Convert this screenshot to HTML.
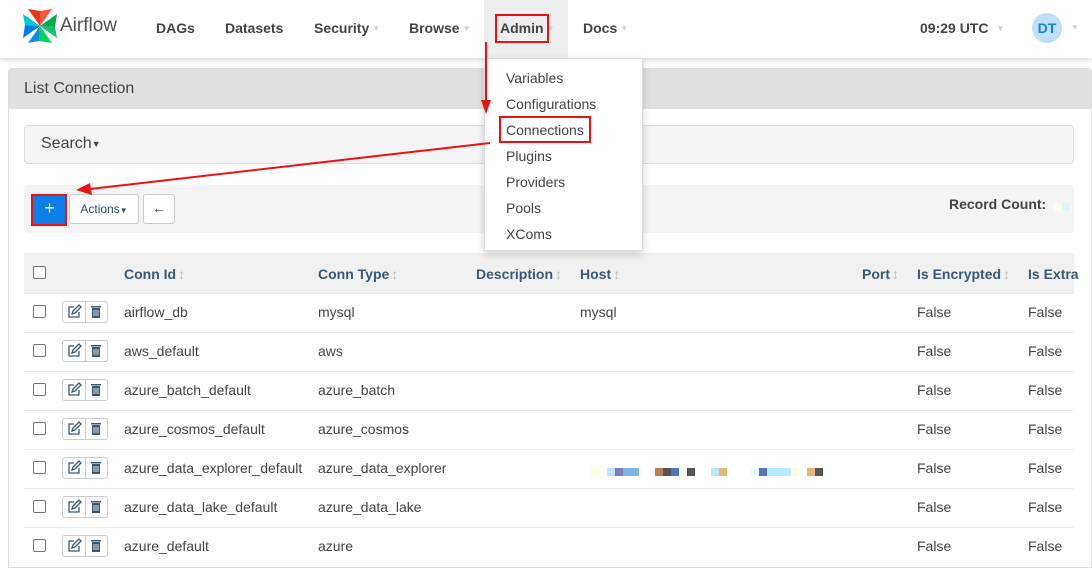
<!DOCTYPE html>
<html><head><meta charset="utf-8"><style>
*{box-sizing:border-box;margin:0;padding:0}
body{width:1092px;height:563px;overflow:hidden;background:#fff;font-family:"Liberation Sans",Arial,sans-serif;position:relative;color:#333}
.a{position:absolute;white-space:nowrap}
.nav{position:absolute;left:0;top:0;width:1092px;height:58px;background:#fff;box-shadow:0 2px 5px rgba(0,0,0,.15);z-index:2}
.ni{position:absolute;top:20px;font-size:14px;font-weight:bold;color:#444}
.car{color:#d8c8d8;font-size:8px;font-weight:normal;margin-left:3px;vertical-align:2px}
.panel{position:absolute;left:8px;top:68px;width:1084px;height:500px;border:1px solid #ddd;border-radius:4px 4px 0 0;background:#fff}
.ph{position:absolute;left:0;top:0;right:0;height:40px;background:#e0e0e0}
.th{font-size:14px;font-weight:bold;color:#3b5874;top:266px}
.sort{color:#bbb;font-weight:bold;margin-left:2px}
.td{font-size:14px;color:#444}
.cb{position:absolute;width:13px;height:13px;border:1px solid #777;border-radius:2px;background:#fff}
.row{position:absolute;left:24px;width:1050px;height:39px;border-top:1px solid #eaeaea}
.ab{position:absolute;left:62px;width:46px;height:22px;border:1px solid #ccc;border-radius:3px;background:#fff}
.dd{position:absolute;left:484px;top:58px;width:159px;height:193px;background:#fff;border:1px solid #ddd;box-shadow:0 3px 8px rgba(0,0,0,.18);z-index:3}
.dd div{position:absolute;left:21px;font-size:14px;color:#444}
.px{position:absolute;top:468px;height:8px}
.sep{position:absolute;left:85px;width:1px;height:22px;background:#ccc}
</style></head><body>
<div class="nav">
<svg class="a" style="left:22px;top:8px" width="36" height="36" viewBox="0 0 36 36">
<path d="M18 18 L6 1 L19 3 Z" fill="#e43921"/>
<path d="M18 18 L35 6 L33 19 Z" fill="#00ad46"/>
<path d="M18 18 L30 35 L17 33 Z" fill="#04d659"/>
<path d="M18 18 L1 30 L3 17 Z" fill="#017cee"/>
<path d="M18 18 L3 17 L1 6 Z" fill="#00c7d4"/>
<path d="M18 18 L19 3 L30 1 Z" fill="#f05a3a"/>
<path d="M18 18 L33 19 L35 30 Z" fill="#11c26d"/>
<path d="M18 18 L17 33 L6 35 Z" fill="#0a8fe8"/>
</svg>
<div class="a" style="left:60px;top:15px;font-size:19px;color:#51504f">Airflow</div>
<div class="ni" style="left:156px">DAGs</div>
<div class="ni" style="left:225px">Datasets</div>
<div class="ni" style="left:314px">Security<span class="car">▼</span></div>
<div class="ni" style="left:409px">Browse<span class="car">▼</span></div>
<div class="a" style="left:484px;top:0;width:84px;height:58px;background:#eee"></div>
<div class="ni" style="left:500px">Admin<span class="car">▼</span></div>
<div class="ni" style="left:583px">Docs<span class="car">▼</span></div>
<div class="ni" style="left:920px">09:29 UTC<span class="car" style="margin-left:8px">▼</span></div>
<div class="a" style="left:1032px;top:13px;width:30px;height:30px;border-radius:50%;background:#bfdffb;color:#1a7fe0;font-weight:bold;font-size:14px;text-align:center;line-height:30px">DT</div>
<div class="a car" style="left:1068px;top:23px">▼</div>
</div>

<div class="panel"><div class="ph"></div>
<div class="a" style="left:15px;top:11px;font-size:16px;color:#444">List Connection</div></div>

<div class="a" style="left:24px;top:125px;width:1050px;height:39px;background:#f4f4f4;border:1px solid #ddd;border-radius:4px"></div>
<div class="a" style="left:41px;top:135px;font-size:16px;color:#444">Search<span style="font-size:9px;vertical-align:1px">▼</span></div>

<div class="a" style="left:24px;top:185px;width:1050px;height:48px;background:#f4f4f4;border-radius:4px"></div>
<div class="a" style="left:33px;top:194px;width:33px;height:30px;background:#0d7ee8;color:#fff;font-size:18px;text-align:center;line-height:28px">+</div>
<div class="a" style="left:69px;top:194px;width:70px;height:30px;background:#fff;border:1px solid #ccc;border-radius:3px;font-size:12px;color:#2d4f6f;text-align:center;line-height:28px">Actions<span style="font-size:8px">▼</span></div>
<div class="a" style="left:143px;top:194px;width:32px;height:30px;background:#fff;border:1px solid #ccc;border-radius:3px;font-size:14px;color:#2d4f6f;text-align:center;line-height:27px">←</div>
<div class="a" style="left:949px;top:196px;font-size:14px;font-weight:bold;color:#444">Record Count:</div>
<div class="a" style="left:1054px;top:203px;width:8px;height:8px;background:#fbfbe8"></div>
<div class="a" style="left:1062px;top:203px;width:8px;height:8px;background:#e0f4f8"></div>

<div class="a" style="left:24px;top:253px;width:1050px;height:40px;background:#f0f0f0"></div>
<div class="cb" style="left:33px;top:266px"></div>
<div class="a th" style="left:124px">Conn Id<span class="sort">↕</span></div>
<div class="a th" style="left:318px">Conn Type<span class="sort">↕</span></div>
<div class="a th" style="left:476px">Description<span class="sort">↕</span></div>
<div class="a th" style="left:580px">Host<span class="sort">↕</span></div>
<div class="a th" style="left:862px">Port<span class="sort">↕</span></div>
<div class="a th" style="left:917px">Is Encrypted<span class="sort">↕</span></div>
<div class="a th" style="left:1028px">Is Extra</div>

<div class="row" style="top:293px"></div><div class="row" style="top:332px"></div><div class="row" style="top:371px"></div><div class="row" style="top:410px"></div><div class="row" style="top:449px"></div><div class="row" style="top:488px"></div><div class="row" style="top:527px"></div>

<div class="cb" style="left:33px;top:305px"></div><div class="ab" style="top:301px"></div>
<div class="cb" style="left:33px;top:344px"></div><div class="ab" style="top:340px"></div>
<div class="cb" style="left:33px;top:383px"></div><div class="ab" style="top:379px"></div>
<div class="cb" style="left:33px;top:422px"></div><div class="ab" style="top:418px"></div>
<div class="cb" style="left:33px;top:461px"></div><div class="ab" style="top:457px"></div>
<div class="cb" style="left:33px;top:500px"></div><div class="ab" style="top:496px"></div>
<div class="cb" style="left:33px;top:539px"></div><div class="ab" style="top:535px"></div>
<div class="sep" style="top:301px"></div><div class="sep" style="top:340px"></div><div class="sep" style="top:379px"></div><div class="sep" style="top:418px"></div><div class="sep" style="top:457px"></div><div class="sep" style="top:496px"></div><div class="sep" style="top:535px"></div>
<svg class="a" style="left:66px;top:304px" width="40" height="250" viewBox="0 0 40 250">
<g id="ic" fill="none" stroke="#3b5874" stroke-width="1.3"><path d="M8 3H3v10h10V8"/><path d="M6 10l1-3 6-6 2 2-6 6z"/><rect x="26" y="4" width="8" height="10" fill="#3b5874" stroke="none"/><rect x="25" y="2" width="10" height="1.5" fill="#3b5874" stroke="none"/><path d="M28 6v6M30 6v6M32 6v6" stroke="#fff" stroke-width=".8"/></g>
<use href="#ic" y="39"/><use href="#ic" y="78"/><use href="#ic" y="117"/><use href="#ic" y="156"/><use href="#ic" y="195"/><use href="#ic" y="234"/>
</svg>

<div class="a td" style="left:124px;top:304px">airflow_db</div><div class="a td" style="left:318px;top:304px">mysql</div><div class="a td" style="left:580px;top:304px">mysql</div>
<div class="a td" style="left:124px;top:343px">aws_default</div><div class="a td" style="left:318px;top:343px">aws</div>
<div class="a td" style="left:124px;top:382px">azure_batch_default</div><div class="a td" style="left:318px;top:382px">azure_batch</div>
<div class="a td" style="left:124px;top:421px">azure_cosmos_default</div><div class="a td" style="left:318px;top:421px">azure_cosmos</div>
<div class="a td" style="left:124px;top:460px">azure_data_explorer_default</div><div class="a td" style="left:318px;top:460px">azure_data_explorer</div>
<div class="a td" style="left:124px;top:499px">azure_data_lake_default</div><div class="a td" style="left:318px;top:499px">azure_data_lake</div>
<div class="a td" style="left:124px;top:538px">azure_default</div><div class="a td" style="left:318px;top:538px">azure</div>
<div class="a td" style="left:917px;top:305px;line-height:39px;margin-top:-12px">False<br>False<br>False<br>False<br>False<br>False<br>False</div>
<div class="a td" style="left:1028px;top:305px;line-height:39px;margin-top:-12px">False<br>False<br>False<br>False<br>False<br>False<br>False</div>

<div class="px" style="left:591px;width:8px;background:#fffde0"></div>
<div class="px" style="left:607px;width:8px;background:#b8e8fc"></div>
<div class="px" style="left:615px;width:8px;background:#7f7bbd"></div>
<div class="px" style="left:623px;width:16px;background:#78b4e8"></div>
<div class="px" style="left:655px;width:8px;background:#b87c55"></div>
<div class="px" style="left:663px;width:8px;background:#555"></div>
<div class="px" style="left:671px;width:8px;background:#5078b8"></div>
<div class="px" style="left:687px;width:8px;background:#555"></div>
<div class="px" style="left:711px;width:8px;background:#b8e8fc"></div>
<div class="px" style="left:719px;width:8px;background:#e8b478"></div>
<div class="px" style="left:751px;width:8px;background:#e8fcfc"></div>
<div class="px" style="left:759px;width:8px;background:#5078b8"></div>
<div class="px" style="left:767px;width:24px;background:#b8e8fc"></div>
<div class="px" style="left:791px;width:8px;background:#fffde0"></div>
<div class="px" style="left:807px;width:8px;background:#e8b478"></div>
<div class="px" style="left:815px;width:8px;background:#555"></div>

<div class="dd">
<div style="top:11px">Variables</div><div style="top:37px">Configurations</div><div style="top:63px">Connections</div><div style="top:89px">Plugins</div><div style="top:115px">Providers</div><div style="top:141px">Pools</div><div style="top:167px">XComs</div>
</div>

<svg class="a" style="left:0;top:0;z-index:5" width="1092" height="563">
<g fill="none" stroke="#ee1111" stroke-width="2">
<rect x="496" y="15" width="52" height="27"/>
<rect x="500" y="117" width="90" height="25"/>
<rect x="32" y="195" width="34" height="30"/>
<path d="M486 42V102"/>
<path d="M490 143L90 189"/>
</g>
<path d="M481 100h10l-5 14z" fill="#ee1111"/>
<path d="M76 190l14-7 2 12z" fill="#ee1111"/>
</svg>
</body></html>
